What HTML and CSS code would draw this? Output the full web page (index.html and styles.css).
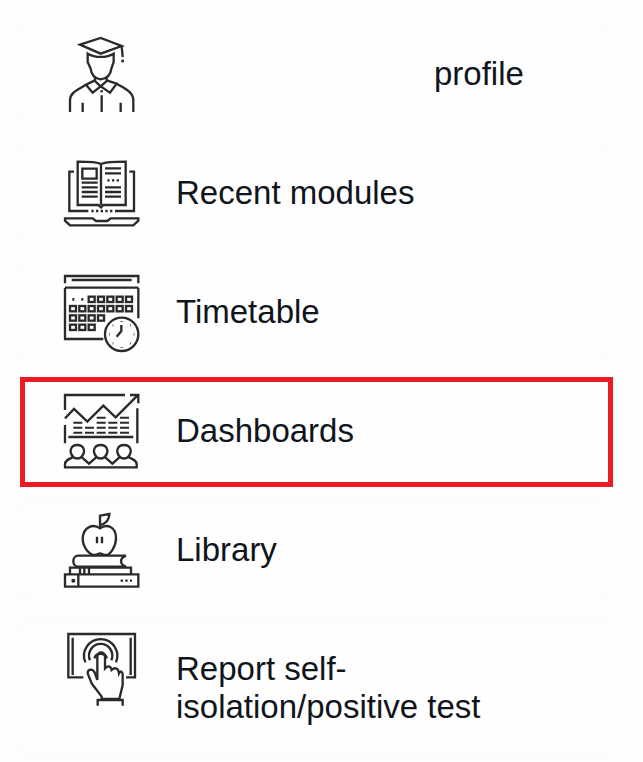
FILE: index.html
```html
<!DOCTYPE html>
<html lang="en">
<head>
  <meta charset="UTF-8">
  <title>Menu</title>
  <link rel="stylesheet" href="styles.css">
</head>
<body>

  <div class="menu">

    <a class="item">
      <svg class="icon" viewBox="0 -20 300 270">
        <path d="M90 33 152 13 215 37 152 60Z"/>
        <path d="M215 37 218 70"/>
        <path class="thick" d="M218 78V86"/>
        <path d="M113 60V85L122 105C124 125 135 135 152 137 170 135 182 125 184 105L191 85V60C170 73 135 73 113 60Z"/>
        <path d="M135 130V142L152 158 170 142V130"/>
        <path d="M135 140 108 153 128 177 152 158 180 177 200 150 170 140"/>
        <path d="M60 235V200C60 175 85 168 108 153M250 235V200C250 175 225 165 200 150"/>
        <path d="M98 207V235M212 207V235M155 185V235"/>
        <path class="thick" d="M155 170V176"/>
      </svg>
      <span class="label profile">profile</span>
    </a>

    <a class="item">
      <svg class="icon" viewBox="0 -12 300 270">
        <path d="M153 42C140 35 100 35 83 35V165H145L153 172 160 165H227V35C205 35 170 35 153 42ZM153 42V165"/>
        <path d="M97 56H140V86H97Z"/>
        <path d="M95 98H143M95 112H143M95 126H143M95 140H143M165 55H213M165 70H213M165 112H213M165 126H213M165 140H213"/>
        <path class="dots" d="M172 91H208"/>
        <path d="M72 65H58V183H115M238 65H252V183H195"/>
        <path class="dots" d="M124 183H190"/>
        <path d="M45 205H128L138 213H172L182 205H265V212L250 226H60L45 212Z"/>
      </svg>
      <span class="label">Recent modules</span>
    </a>

    <a class="item">
      <svg class="icon" viewBox="0 0 300 270">
        <path d="M45 55V33H265V55M45 68H265M45 68V222H160M265 68V160"/>
        <path class="thick" d="M65 45H245"/>
        <path class="thick" d="M67 103H73M94 103H100"/>
        <g class="cells">
          <rect x="116" y="95" width="18" height="16"/><rect x="144" y="95" width="18" height="16"/><rect x="172" y="95" width="18" height="16"/><rect x="200" y="95" width="18" height="16"/><rect x="228" y="95" width="18" height="16"/>
          <rect x="60" y="123" width="18" height="16"/><rect x="88" y="123" width="18" height="16"/><rect x="116" y="123" width="18" height="16"/><rect x="144" y="123" width="18" height="16"/><rect x="172" y="123" width="18" height="16"/><rect x="200" y="123" width="18" height="16"/><rect x="228" y="123" width="18" height="16"/>
          <rect x="60" y="151" width="18" height="16"/><rect x="88" y="151" width="18" height="16"/><rect x="116" y="151" width="18" height="16"/><rect x="144" y="151" width="18" height="16"/>
          <rect x="60" y="179" width="18" height="16"/><rect x="88" y="179" width="18" height="16"/><rect x="116" y="179" width="18" height="16"/>
        </g>
        <circle cx="215" cy="208" r="50"/>
        <path d="M214 180V198L200 215"/>
        <path class="dots" d="M215 168V170M215 246V248M177 208H179M251 208H253M188 181H190M240 181H242M188 235H190M240 235H242"/>
      </svg>
      <span class="label">Timetable</span>
    </a>

    <a class="item">
      <svg class="icon" viewBox="0 -3 300 270">
        <path d="M45 75V30H225M262 70V175M45 120V175"/>
        <path d="M45 100 72 72 112 110 160 62 197 97 262 32M240 30H265V55"/>
        <path class="bars" d="M70 113H97M70 128H97M70 143H97M105 128H132M105 143H132M140 98H167M140 113H167M140 128H167M140 143H167M175 113H202M175 128H202M175 143H202M210 98H237M210 113H237M210 128H237M210 143H237"/>
        <path d="M55 156H250"/>
        <path d="M70 216C55 200 62 180 82 180 102 180 109 200 94 216L117 236 140 216C125 200 132 180 152 180 172 180 179 200 164 216L187 236 210 216C195 200 202 180 222 180 242 180 249 200 234 216 248 222 260 226 260 238V247H45V238C45 226 57 222 70 216 75 222 89 222 94 216M140 216C145 222 159 222 164 216M210 216C215 222 229 222 234 216"/>
      </svg>
      <span class="label">Dashboards</span>
    </a>

    <a class="item">
      <svg class="icon" viewBox="0 -6 300 270">
        <path d="M150 70C130 55 100 65 98 100 98 130 120 150 135 150 142 150 145 145 150 145 155 145 160 150 168 150 180 150 198 125 198 100 198 65 170 55 150 70Z"/>
        <path d="M150 70V32L178 27C178 45 165 58 150 60"/>
        <path d="M141 95V115M156 95V115"/>
        <path d="M228 152H85C65 152 65 185 85 185H228C208 178 208 160 228 152Z"/>
        <path d="M60 208V188H243V208M90 188V208M103 188V208M117 188V208"/>
        <path d="M45 208H265V245H45ZM85 208V245"/>
        <circle class="fill" cx="70" cy="227" r="6"/>
        <path class="dots" d="M212 227H246"/>
      </svg>
      <span class="label">Library</span>
    </a>

    <a class="item">
      <svg class="icon" viewBox="0 -9 300 270">
        <path d="M100 157H55V27H255V157H228M68 38V150M242 38V150"/>
        <path d="M106 112A50 50 0 1 1 198 112M120 106A35 35 0 1 1 184 106M133 100A20 20 0 0 1 171 100"/>
        <path d="M142 165V95C142 78 165 78 165 95V130C175 120 183 125 185 135 195 125 205 130 207 145 212 135 218 140 218 150V180L208 222H155V215L125 175 113 145C113 130 130 130 135 145L142 165"/>
        <path d="M143 242V225H218V242"/>
      </svg>
      <span class="label">Report self-isolation/positive test</span>
    </a>

    <div class="highlight"></div>
  </div>

</body>
</html>
```

FILE: styles.css
```css
html, body {
  height: 100%;
}
body {
  margin: 0;
  background: #fdfdfd;
  font-family: "Liberation Sans", Arial, sans-serif;
  color: #10151c;
}
.menu {
  position: relative;
  display: flex;
  flex-direction: column;
  gap: 26px;
  width: 588px;
  margin-left: 20px;
  padding-top: 27px;
}
.item {
  display: flex;
  align-items: flex-start;
  gap: 26px;
  min-height: 93px;
  padding-left: 30px;
  box-sizing: border-box;
  border-radius: 12px;
  background: #fefefe;
  box-shadow: inset 0 0 0 1px #fbfbfb;
}
.icon {
  flex: none;
  width: 100px;
  height: 90px;
  fill: none;
  stroke: #2a2a2a;
  stroke-width: 7;
}
.icon .thick {
  stroke-width: 8;
}
.icon .bars {
  stroke-width: 6;
}
.icon .dots {
  stroke-width: 7;
  stroke-dasharray: 7 7;
}
.icon .cells rect {
  stroke-width: 7;
}
.icon .fill {
  fill: #2a2a2a;
  stroke: none;
}
.label {
  width: 340px;
  padding-top: 28px;
  padding-bottom: 27px;
  font-size: 33px;
  line-height: 38px;
}
.profile {
  padding-left: 258px;
  width: auto;
}
.highlight {
  position: absolute;
  left: 0;
  top: 377px;
  width: 593px;
  height: 110px;
  box-sizing: border-box;
  border: 5px solid #ed1c24;
}
```
